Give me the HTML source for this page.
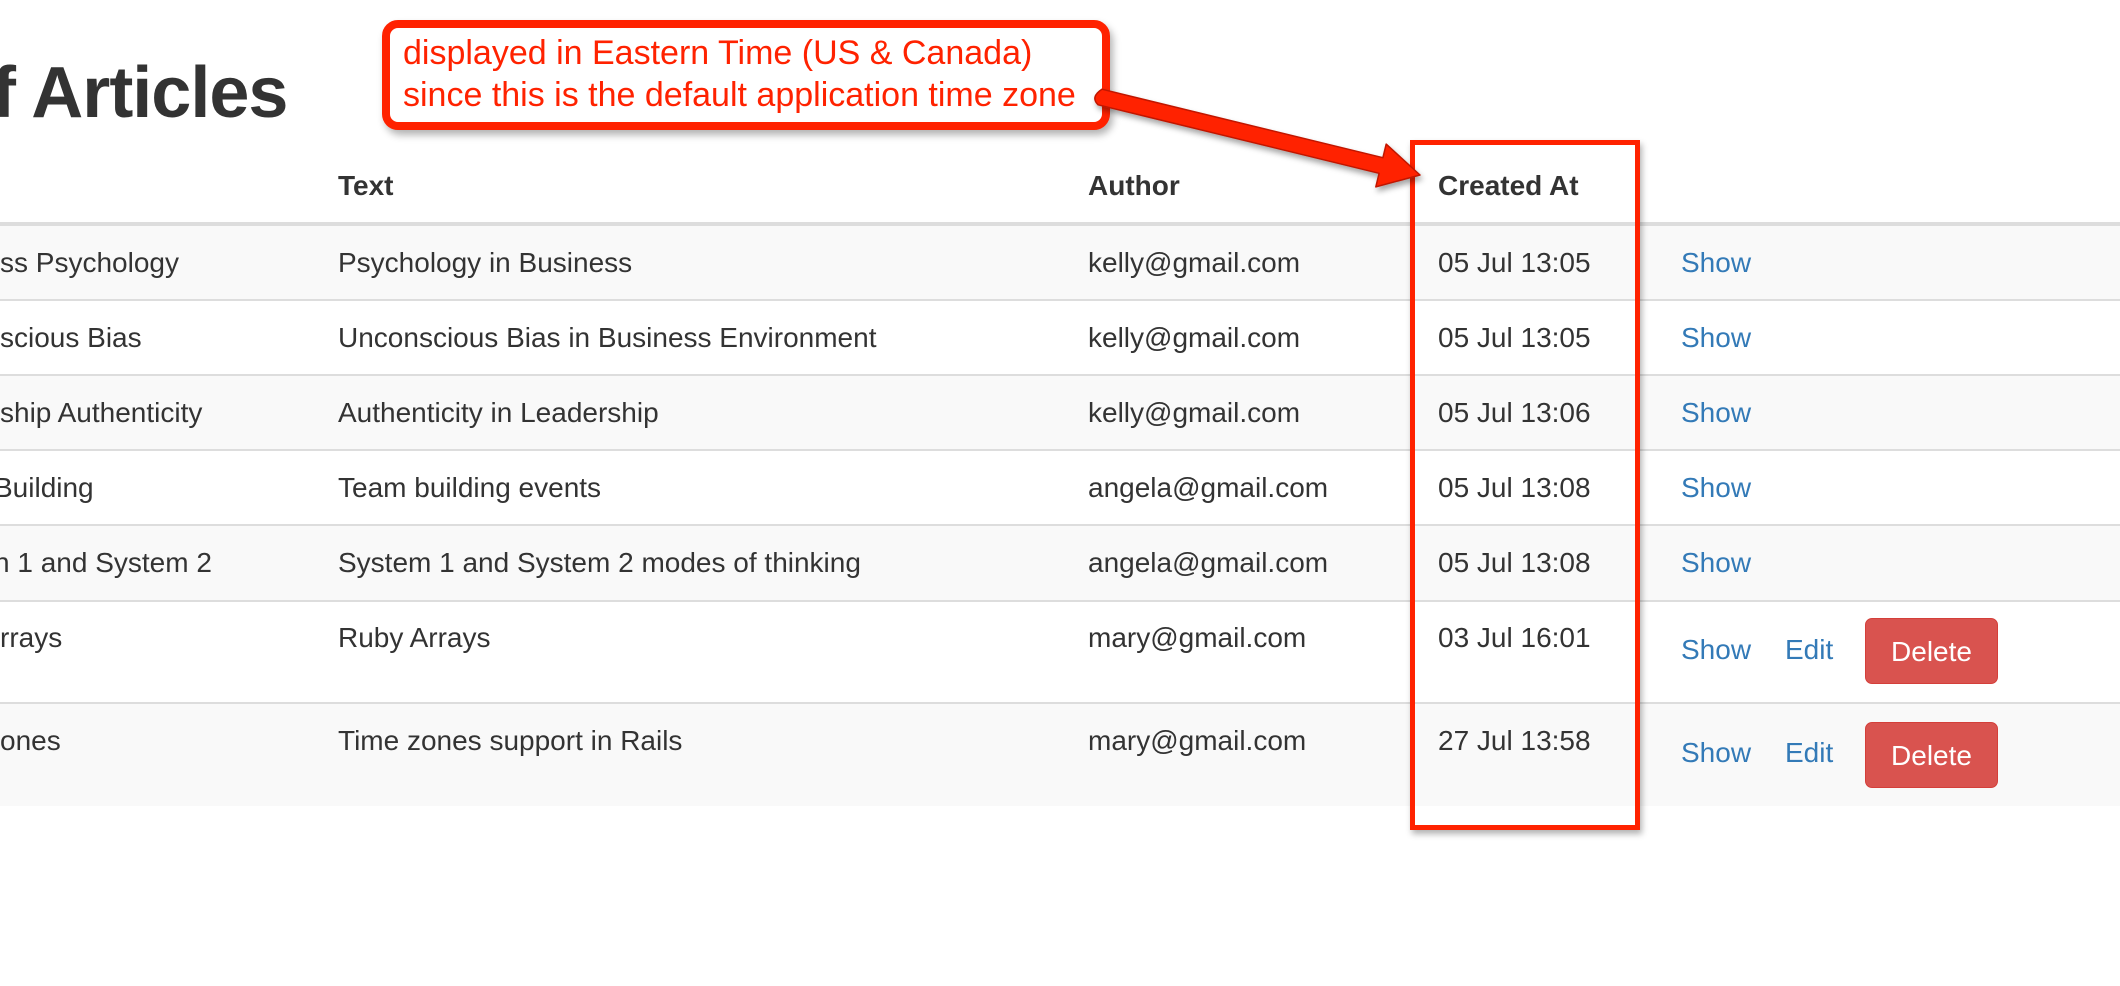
<!DOCTYPE html>
<html><head><meta charset="utf-8"><style>
body{margin:0;width:2120px;height:986px;background:#fff;font-family:"Liberation Sans",Arial,sans-serif;color:#333;position:relative;overflow:hidden}
.a{position:absolute;white-space:nowrap}
.h1{font-size:72px;font-weight:bold;left:-8px;top:52px;letter-spacing:-1px}
.th{font-size:28px;font-weight:bold;top:170px}
.row{position:absolute;left:0;width:2120px;border-top:2px solid #ddd}
.s{background:#f9f9f9}
.td{font-size:28px}
.lnk{color:#337ab7;font-size:28px}
.btn{position:absolute;left:1865px;width:133px;height:66px;background:#d9534f;border:1px solid #d43f3a;border-radius:7px;color:#fff;font-size:28px;text-align:center;line-height:66px;box-sizing:border-box}
</style></head><body>
<div class="a h1">f Articles</div>
<div class="a th" style="left:338px">Text</div>
<div class="a th" style="left:1088px">Author</div>
<div class="a th" style="left:1438px">Created At</div>
<div class="row" style="top:222px;height:0;border-top:4px solid #ddd"></div>

<div class="row s" style="top:226px;height:73px;border-top:none"></div>
<div class="row" style="top:299px;height:73px"></div>
<div class="row s" style="top:374px;height:73px"></div>
<div class="row" style="top:449px;height:73px"></div>
<div class="row s" style="top:524px;height:74px"></div>
<div class="row" style="top:600px;height:102px"></div>
<div class="row s" style="top:702px;height:102px"></div>

<div class="a td" style="left:0;top:247px">ss Psychology</div>
<div class="a td" style="left:338px;top:247px">Psychology in Business</div>
<div class="a td" style="left:1088px;top:247px">kelly@gmail.com</div>
<div class="a td" style="left:1438px;top:247px">05 Jul 13:05</div>
<div class="a lnk" style="left:1681px;top:247px">Show</div>

<div class="a td" style="left:0;top:322px">scious Bias</div>
<div class="a td" style="left:338px;top:322px">Unconscious Bias in Business Environment</div>
<div class="a td" style="left:1088px;top:322px">kelly@gmail.com</div>
<div class="a td" style="left:1438px;top:322px">05 Jul 13:05</div>
<div class="a lnk" style="left:1681px;top:322px">Show</div>

<div class="a td" style="left:0;top:397px">ship Authenticity</div>
<div class="a td" style="left:338px;top:397px">Authenticity in Leadership</div>
<div class="a td" style="left:1088px;top:397px">kelly@gmail.com</div>
<div class="a td" style="left:1438px;top:397px">05 Jul 13:06</div>
<div class="a lnk" style="left:1681px;top:397px">Show</div>

<div class="a td" style="left:-6px;top:472px">Building</div>
<div class="a td" style="left:338px;top:472px">Team building events</div>
<div class="a td" style="left:1088px;top:472px">angela@gmail.com</div>
<div class="a td" style="left:1438px;top:472px">05 Jul 13:08</div>
<div class="a lnk" style="left:1681px;top:472px">Show</div>

<div class="a td" style="left:-6px;top:547px">n 1 and System 2</div>
<div class="a td" style="left:338px;top:547px">System 1 and System 2 modes of thinking</div>
<div class="a td" style="left:1088px;top:547px">angela@gmail.com</div>
<div class="a td" style="left:1438px;top:547px">05 Jul 13:08</div>
<div class="a lnk" style="left:1681px;top:547px">Show</div>

<div class="a td" style="left:0;top:622px">rrays</div>
<div class="a td" style="left:338px;top:622px">Ruby Arrays</div>
<div class="a td" style="left:1088px;top:622px">mary@gmail.com</div>
<div class="a td" style="left:1438px;top:622px">03 Jul 16:01</div>
<div class="a lnk" style="left:1681px;top:634px">Show</div>
<div class="a lnk" style="left:1785px;top:634px">Edit</div>
<div class="btn" style="top:618px">Delete</div>

<div class="a td" style="left:0;top:725px">ones</div>
<div class="a td" style="left:338px;top:725px">Time zones support in Rails</div>
<div class="a td" style="left:1088px;top:725px">mary@gmail.com</div>
<div class="a td" style="left:1438px;top:725px">27 Jul 13:58</div>
<div class="a lnk" style="left:1681px;top:737px">Show</div>
<div class="a lnk" style="left:1785px;top:737px">Edit</div>
<div class="btn" style="top:722px">Delete</div>

<!-- red box -->
<div class="a" style="left:1410px;top:140px;width:220px;height:680px;border:5px solid #ff2200;box-shadow:2px 4px 6px rgba(0,0,0,.3)"></div>
<!-- callout -->
<div class="a" style="left:382px;top:20px;width:712px;height:94px;border:8px solid #ff2200;border-radius:16px;background:#fff;box-shadow:3px 5px 8px rgba(0,0,0,.3)"></div>
<div class="a" style="left:403px;top:32px;font-size:34px;line-height:42px;color:#ff2200">displayed in Eastern Time (US &amp; Canada)<br>since this is the default application time zone</div>
<svg class="a" style="left:0;top:0" width="2120" height="986">
<defs><filter id="f"><feDropShadow dx="2" dy="4" stdDeviation="3" flood-opacity=".35"/></filter></defs>
<g filter="url(#f)" fill="#ff2200" stroke="#c01800" stroke-width="1.5" stroke-linejoin="round">
<path d="M1101.9,89.2 L1382.9,157.7 L1386.2,144.1 L1420,175 L1375.8,186.9 L1379.1,173.3 L1098.1,104.8 Q1090,97 1101.9,89.2 Z"/>
</g>
</svg>
</body></html>
